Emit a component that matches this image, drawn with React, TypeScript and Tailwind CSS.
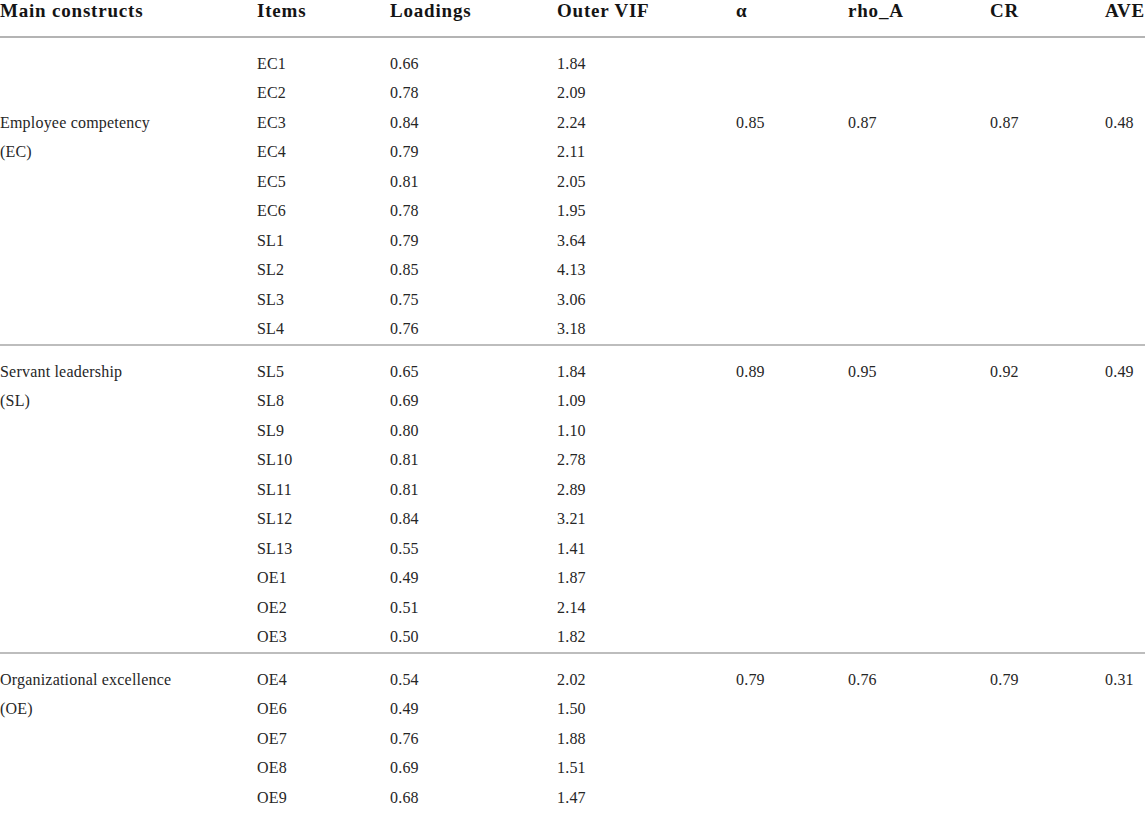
import React from "react";

type Group = {
  name: string[];
  nameRow: number;
  stats: string[];
  items: [string, string, string][];
};

const groups: Group[] = [
  {
    name: ["Employee competency", "(EC)"],
    nameRow: 2,
    stats: ["0.85", "0.87", "0.87", "0.48"],
    items: [
      ["EC1", "0.66", "1.84"],
      ["EC2", "0.78", "2.09"],
      ["EC3", "0.84", "2.24"],
      ["EC4", "0.79", "2.11"],
      ["EC5", "0.81", "2.05"],
      ["EC6", "0.78", "1.95"],
      ["SL1", "0.79", "3.64"],
      ["SL2", "0.85", "4.13"],
      ["SL3", "0.75", "3.06"],
      ["SL4", "0.76", "3.18"],
    ],
  },
  {
    name: ["Servant leadership", "(SL)"],
    nameRow: 0,
    stats: ["0.89", "0.95", "0.92", "0.49"],
    items: [
      ["SL5", "0.65", "1.84"],
      ["SL8", "0.69", "1.09"],
      ["SL9", "0.80", "1.10"],
      ["SL10", "0.81", "2.78"],
      ["SL11", "0.81", "2.89"],
      ["SL12", "0.84", "3.21"],
      ["SL13", "0.55", "1.41"],
      ["OE1", "0.49", "1.87"],
      ["OE2", "0.51", "2.14"],
      ["OE3", "0.50", "1.82"],
    ],
  },
  {
    name: ["Organizational excellence", "(OE)"],
    nameRow: 0,
    stats: ["0.79", "0.76", "0.79", "0.31"],
    items: [
      ["OE4", "0.54", "2.02"],
      ["OE6", "0.49", "1.50"],
      ["OE7", "0.76", "1.88"],
      ["OE8", "0.69", "1.51"],
      ["OE9", "0.68", "1.47"],
    ],
  },
];

const cols = "grid grid-cols-[257px_133px_167px_179px_112px_142px_115px_1fr]";

const headers = ["Main constructs", "Items", "Loadings", "Outer VIF", "α", "rho_A", "CR", "AVE"];

export default function App() {
  return (
    <div className="w-[1145px] h-[820px] overflow-hidden bg-white text-[#262626] font-['Liberation_Serif',serif]">
      {/* header */}
      <div className={`${cols} h-[38px] border-b-2 border-[#b4b4b4] text-[19px] tracking-[0.8px] font-bold text-[#141414] whitespace-nowrap`}>
        {headers.map((h) => (
          <div key={h} className="leading-[21px]">
            {h}
          </div>
        ))}
      </div>

      {groups.map((g, gi) => (
        <div
          key={gi}
          className={
            gi === groups.length - 1
              ? "pt-[11px] pb-[9px] border-b border-[#e3e3e3]"
              : "pt-[11px] border-b-2 border-[#bdbdbd]"
          }
        >
          {g.items.map((it, i) => (
            <div key={it[0]} className={`${cols} h-[29.5px] items-center text-[16px] tracking-[0.2px] whitespace-nowrap`}>
              <div>{i === g.nameRow ? g.name[0] : i === g.nameRow + 1 ? g.name[1] : ""}</div>
              <div>{it[0]}</div>
              <div>{it[1]}</div>
              <div>{it[2]}</div>
              {g.stats.map((s, si) => (
                <div key={si}>{i === g.nameRow ? s : ""}</div>
              ))}
            </div>
          ))}
        </div>
      ))}
    </div>
  );
}
